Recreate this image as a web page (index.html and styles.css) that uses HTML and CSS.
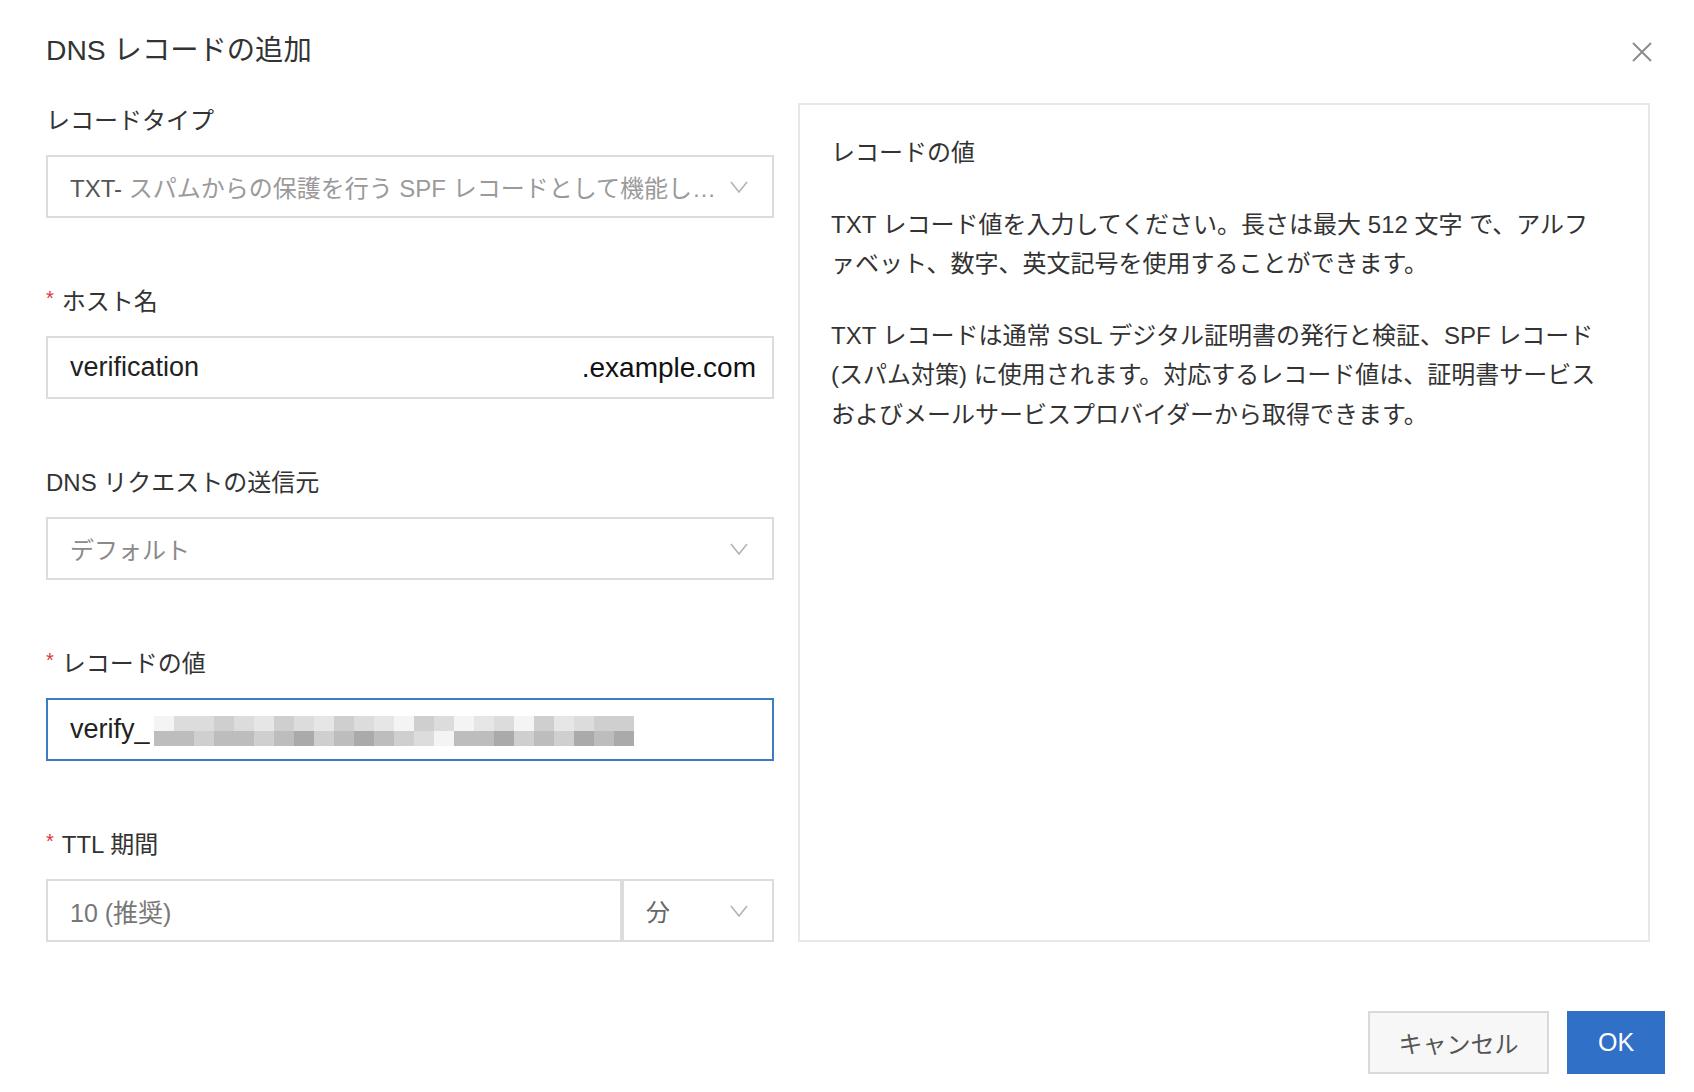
FILE: index.html
```html
<!DOCTYPE html>
<html lang="ja">
<head>
<meta charset="utf-8">
<title>DNS レコードの追加</title>
<link rel="stylesheet" href="styles.css">
</head>
<body>
<div class="dialog">
  <header class="header">
    <h1 class="title">DNS レコードの追加</h1>
    <button class="close" aria-label="閉じる">
      <svg width="20" height="20" viewBox="0 0 20 20"><path d="M1 1 L19 19 M19 1 L1 19" stroke="#8c8c8c" stroke-width="2" fill="none"/></svg>
    </button>
  </header>
  <div class="main">
    <div class="form">
      <div class="field">
        <div class="label">レコードタイプ</div>
        <div class="box select">
          <span class="value disabled"><span class="dark">TXT-</span> スパムからの保護を行う SPF レコードとして機能し…</span>
          <svg class="chev" width="18" height="12" viewBox="0 0 18 12"><path d="M1 1 L9 11 L17 1" stroke="#b3b3b3" stroke-width="1.6" fill="none"/></svg>
        </div>
      </div>
      <div class="field">
        <div class="label"><span class="req">*</span>ホスト名</div>
        <div class="box input">
          <span class="value latin">verification</span>
          <span class="suffix">.example.com</span>
        </div>
      </div>
      <div class="field">
        <div class="label">DNS リクエストの送信元</div>
        <div class="box select">
          <span class="value muted">デフォルト</span>
          <svg class="chev" width="18" height="12" viewBox="0 0 18 12"><path d="M1 1 L9 11 L17 1" stroke="#b3b3b3" stroke-width="1.6" fill="none"/></svg>
        </div>
      </div>
      <div class="field">
        <div class="label"><span class="req">*</span>レコードの値</div>
        <div class="box input focused">
          <span class="value latin">verify_</span>
          <div class="mosaic">
            <span class="e"></span><span class="b"></span><span class="b"></span><span class="c"></span><span class="b"></span><span class="a"></span><span class="c"></span><span class="b"></span><span class="a"></span><span class="c"></span><span class="b"></span><span class="a"></span><span class="e"></span><span class="c"></span><span class="b"></span><span class="e"></span><span class="a"></span><span class="b"></span><span class="e"></span><span class="c"></span><span class="a"></span><span class="b"></span><span class="c"></span><span class="c"></span>
            <span class="d"></span><span class="d"></span><span class="c"></span><span class="d"></span><span class="d"></span><span class="c"></span><span class="d"></span><span class="f"></span><span class="c"></span><span class="d"></span><span class="f"></span><span class="d"></span><span class="c"></span><span class="b"></span><span class="e"></span><span class="d"></span><span class="d"></span><span class="f"></span><span class="c"></span><span class="d"></span><span class="c"></span><span class="f"></span><span class="d"></span><span class="f"></span>
          </div>
        </div>
      </div>
      <div class="field">
        <div class="label"><span class="req">*</span>TTL 期間</div>
        <div class="ttl">
          <div class="box input ttl-num"><span class="value grey">10 (推奨)</span></div>
          <div class="box select ttl-unit">
            <span class="value unit">分</span>
            <svg class="chev" width="18" height="12" viewBox="0 0 18 12"><path d="M1 1 L9 11 L17 1" stroke="#b3b3b3" stroke-width="1.6" fill="none"/></svg>
          </div>
        </div>
      </div>
    </div>
    <aside class="help">
      <p class="help-title">レコードの値</p>
      <p>TXT レコード値を入力してください。長さは最大 512 文字 で、アルフ<br>ァベット、数字、英文記号を使用することができます。</p>
      <p>TXT レコードは通常 SSL デジタル証明書の発行と検証、SPF レコード<br>(スパム対策) に使用されます。対応するレコード値は、証明書サービス<br>およびメールサービスプロバイダーから取得できます。</p>
    </aside>
  </div>
  <footer class="footer">
    <button class="btn cancel">キャンセル</button>
    <button class="btn ok">OK</button>
  </footer>
</div>
</body>
</html>
```
FILE: styles.css
```css
* { box-sizing: border-box; }
html, body {
  margin: 0;
  background: #fff;
  font-family: "Liberation Sans", "Noto Sans CJK JP", sans-serif;
  color: #333;
}
.dialog {
  width: 1694px;
  height: 1092px;
  padding: 30px 44px 0 46px;
}
.header {
  display: flex;
  justify-content: space-between;
  align-items: center;
  height: 40px;
  margin-bottom: 33px;
}
.title {
  margin: 0;
  font-size: 28.3px;
  font-weight: normal;
  line-height: 40px;
  color: #333;
}
.close {
  border: 0;
  background: none;
  padding: 0;
  margin-right: -2px;
  margin-top: 4px;
  width: 20px;
  height: 20px;
  display: flex;
}
.main {
  display: flex;
  gap: 24px;
  align-items: stretch;
}
.form {
  width: 728px;
  flex: none;
}
.field { margin-bottom: 66px; }
.field:last-child { margin-bottom: 0; }
.label {
  font-size: 24px;
  line-height: 32px;
  padding-top: 2px;
  margin-bottom: 18px;
  color: #333;
  display: flex;
  align-items: flex-start;
}
.req {
  color: #d9363e;
  font-size: 20px;
  line-height: 24px;
  margin-right: 8px;
}
.box {
  height: 63px;
  border: 2px solid #dcdcdc;
  background: #fff;
  display: flex;
  align-items: center;
  padding: 0 16px 0 22px;
  font-size: 24px;
}
.box.focused { border-color: #3d7bc4; }
.value {
  white-space: nowrap;
  overflow: hidden;
  color: #333;
}
.latin { font-size: 27px; color: #222; }
.disabled { color: #9a9a9a; flex: 1; }
.dark { color: #555; }
.muted { color: #8a8a8a; flex: 1; }
.grey { color: #777; font-size: 25px; }
.unit { color: #666; flex: 1; }
.suffix {
  margin-left: auto;
  color: #111;
  font-size: 28px;
}
.chev { flex: none; margin-left: 8px; margin-right: 8px; }
.mosaic {
  margin-left: 4px;
  display: grid;
  grid-template-columns: repeat(24, 20px);
  grid-template-rows: 15px 15px;
  margin-top: 2px;
}
.mosaic .a { background: #e6e6e6; }
.mosaic .b { background: #dcdcdc; }
.mosaic .c { background: #cfcfcf; }
.mosaic .d { background: #bdbdbd; }
.mosaic .e { background: #f4f4f4; }
.mosaic .f { background: #aaaaaa; }
.ttl { display: flex; }
.ttl-num { width: 576px; flex: none; }
.ttl-unit { flex: 1; padding-left: 22px; }
.help {
  width: 852px;
  flex: none;
  border: 2px solid #e8e8e8;
  padding: 28px 30px 0 31px;
  font-size: 24px;
  line-height: 39.5px;
  color: #333;
}
.help p {
  margin: 0 0 32px;
  white-space: nowrap;
}
.footer {
  display: flex;
  justify-content: flex-end;
  gap: 18px;
  margin-top: 69px;
  margin-right: -15px;
}
.btn {
  height: 63px;
  font-family: "Liberation Sans", "Noto Sans CJK JP", sans-serif;
  padding: 0;
  cursor: pointer;
}
.cancel {
  width: 181px;
  font-size: 24px;
  background: #f7f7f7;
  border: 2px solid #d9d9d9;
  color: #555;
}
.ok {
  width: 98px;
  font-size: 25px;
  background: #3170c7;
  border: 0;
  color: #fff;
}
```
